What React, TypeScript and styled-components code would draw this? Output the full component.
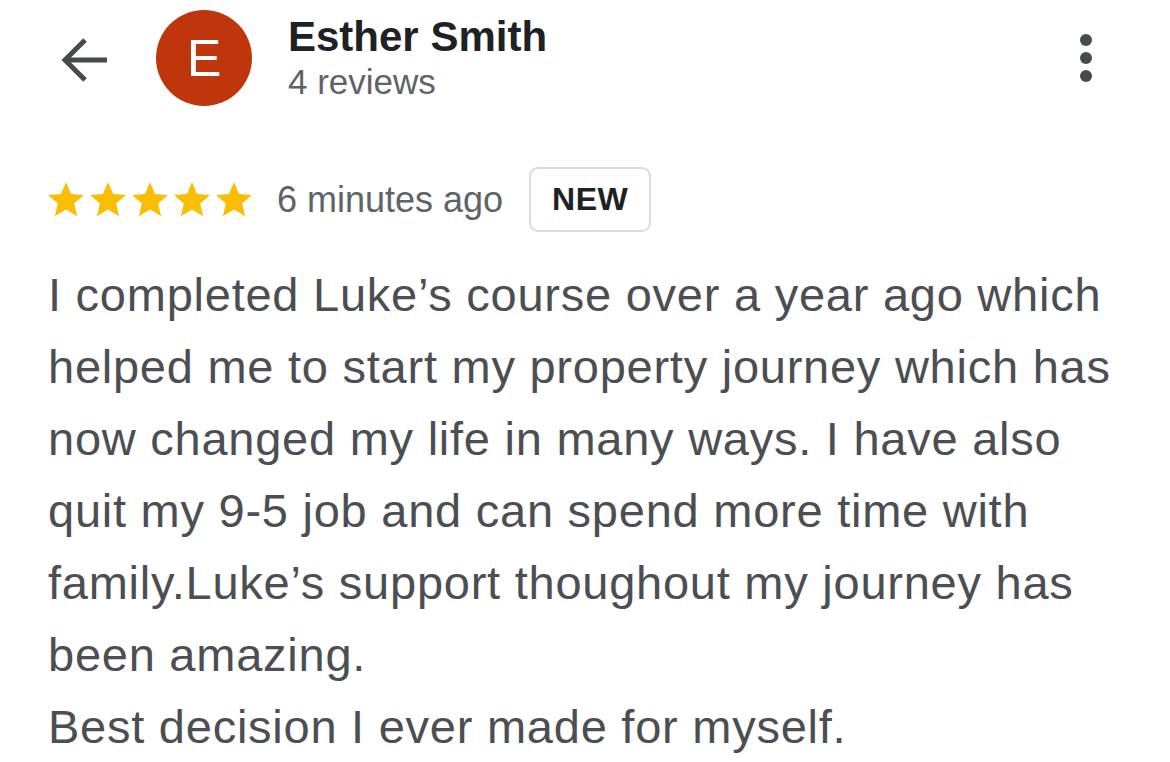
import React from "react";
import styled, { createGlobalStyle } from "styled-components";

const GlobalStyle = createGlobalStyle`
  html, body {
    margin: 0;
    padding: 0;
    background: #ffffff;
  }
  body {
    font-family: "Liberation Sans", Arial, Helvetica, sans-serif;
    -webkit-font-smoothing: antialiased;
  }
`;

const Page = styled.div`
  width: 1170px;
  min-height: 762px;
  box-sizing: border-box;
  padding: 10px 40px 0 48px;
  background: #ffffff;
`;

const Header = styled.header`
  display: flex;
  align-items: center;
  height: 96px;
`;

const BackButton = styled.button`
  display: flex;
  align-items: center;
  justify-content: center;
  width: 48px;
  height: 48px;
  margin: 4px 0 0 12px;
  padding: 0;
  border: none;
  background: transparent;
  color: #474a4f;
  cursor: pointer;
`;

const Avatar = styled.div`
  display: flex;
  align-items: center;
  justify-content: center;
  width: 96px;
  height: 96px;
  margin-left: 48px;
  border-radius: 50%;
  background: #bf360c;
  color: #ffffff;
  font-size: 52px;
  font-weight: 400;
  line-height: 1;
`;

const NameBlock = styled.div`
  display: flex;
  flex-direction: column;
  margin-left: 36px;
`;

const Name = styled.div`
  font-size: 42px;
  font-weight: 700;
  line-height: 48px;
  color: #202124;
`;

const ReviewCount = styled.div`
  font-size: 35px;
  line-height: 42px;
  color: #5f6368;
`;

const KebabButton = styled.button`
  display: flex;
  flex-direction: column;
  align-items: center;
  justify-content: center;
  gap: 6px;
  width: 88px;
  height: 96px;
  margin-left: auto;
  padding: 0;
  border: none;
  background: transparent;
  cursor: pointer;
`;

const Dot = styled.span`
  display: block;
  width: 12px;
  height: 12px;
  border-radius: 50%;
  background: #474a4f;
`;

const MetaRow = styled.div`
  display: flex;
  align-items: center;
  margin-top: 61px;
  height: 65px;
`;

const Stars = styled.div`
  display: flex;
  align-items: center;
  gap: 6px;
`;

const StarIcon = styled.svg`
  display: block;
  width: 36px;
  height: 36px;
  fill: #fbbc04;
`;

const TimeAgo = styled.span`
  margin-left: 25px;
  font-size: 36px;
  color: #5f6368;
`;

const NewBadge = styled.span`
  display: flex;
  align-items: center;
  justify-content: center;
  box-sizing: border-box;
  height: 65px;
  width: 122px;
  margin-left: 26px;
  border: 2px solid #dadce0;
  border-radius: 9px;
  font-size: 32px;
  font-weight: 700;
  letter-spacing: 0.5px;
  color: #202124;
`;

const ReviewText = styled.p`
  margin: 27px 0 0 0;
  font-size: 47px;
  line-height: 72px;
  letter-spacing: 0.75px;
  color: #4b4e53;
  white-space: pre-line;
`;

const Star = () => (
  <StarIcon viewBox="2 2 20 20" aria-hidden="true">
    <path
      d="M12 17.27L18.18 21l-1.64-7.03L22 9.24l-7.19-.61L12 2 9.19 8.63 2 9.24l5.46 4.73L5.82 21z"
      strokeLinejoin="round"
    />
  </StarIcon>
);

const review =
  "I completed Luke\u2019s course over a year ago which helped me to start my property journey which has now changed my life in many ways. I have also quit my 9-5 job and can spend more time with family.Luke\u2019s support thoughout my journey has been amazing.\nBest decision I ever made for myself.";

export default function App() {
  return (
    <>
      <GlobalStyle />
      <Page>
        <Header>
          <BackButton aria-label="Back">
            <svg width="48" height="48" viewBox="0 0 48 48" fill="none" aria-hidden="true">
              <path d="M47 24H5" stroke="currentColor" strokeWidth="5" />
              <path d="M25 4L5 24L25 44" stroke="currentColor" strokeWidth="5" strokeLinejoin="miter" />
            </svg>
          </BackButton>
          <Avatar>E</Avatar>
          <NameBlock>
            <Name>Esther Smith</Name>
            <ReviewCount>4 reviews</ReviewCount>
          </NameBlock>
          <KebabButton aria-label="More options">
            <Dot />
            <Dot />
            <Dot />
          </KebabButton>
        </Header>
        <MetaRow>
          <Stars>
            <Star />
            <Star />
            <Star />
            <Star />
            <Star />
          </Stars>
          <TimeAgo>6 minutes ago</TimeAgo>
          <NewBadge>NEW</NewBadge>
        </MetaRow>
        <ReviewText>{review}</ReviewText>
      </Page>
    </>
  );
}
